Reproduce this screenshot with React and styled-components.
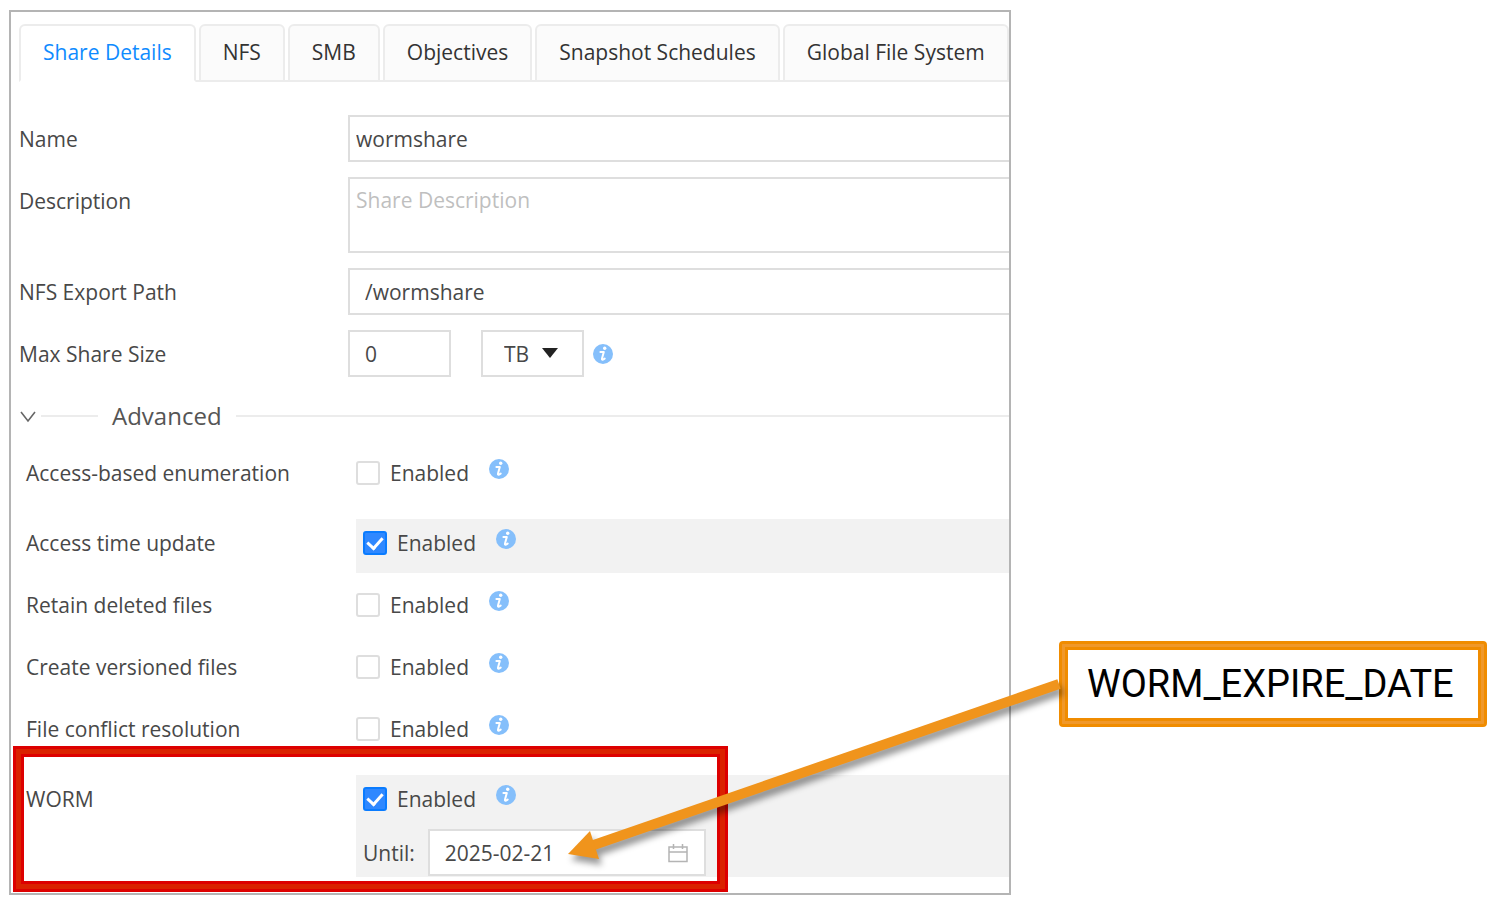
import React, { useState } from 'react';
import styled, { createGlobalStyle } from 'styled-components';

const tabs = [
  'Share Details',
  'NFS',
  'SMB',
  'Objectives',
  'Snapshot Schedules',
  'Global File System',
];

const options = [
  { id: 'enumeration', label: 'Access-based enumeration' },
  { id: 'access-time', label: 'Access time update', checked: true },
  { id: 'retain', label: 'Retain deleted files' },
  { id: 'versioned', label: 'Create versioned files' },
  { id: 'conflict', label: 'File conflict resolution' },
];

const Info = () => (
  <InfoButton type="button" aria-label="More information">
    <svg width="20" height="20" viewBox="0 0 20 20">
      <circle cx="10" cy="10" r="10" fill="#85bffb" />
      <circle cx="11.7" cy="4.2" r="1.7" fill="#fff" />
      <path
        d="M7.400 8h3.400L9 14.600q-.3 1.500 1 1l1.700-1"
        fill="none"
        stroke="#fff"
        strokeWidth="2"
        strokeLinecap="round"
        strokeLinejoin="round"
      />
    </svg>
  </InfoButton>
);

const Toggle = ({ id, name, checked }) => (
  <ToggleWrapper>
    <CheckLabel>
      <Checkbox id={id} aria-label={name} defaultChecked={checked} />
      Enabled
    </CheckLabel>
    <Info />
  </ToggleWrapper>
);

const App = () => {
  const [active, setActive] = useState(tabs[0]);

  return (
    <>
      <GlobalStyle />
      <Page>
        <Panel>
          <Tabs role="tablist">
            {tabs.map((tab) => (
              <Tab
                key={tab}
                type="button"
                role="tab"
                aria-selected={active === tab}
                $active={active === tab}
                onClick={() => setActive(tab)}
              >
                {tab}
              </Tab>
            ))}
          </Tabs>

          <Form>
            <Row>
              <Label htmlFor="name">Name</Label>
              <Input id="name" defaultValue="wormshare" />
            </Row>
            <Row>
              <Label htmlFor="description">Description</Label>
              <TextArea id="description" placeholder="Share Description" />
            </Row>
            <Row>
              <Label htmlFor="path">NFS Export Path</Label>
              <Input id="path" $indent defaultValue="/wormshare" />
            </Row>
            <Row>
              <Label htmlFor="size">Max Share Size</Label>
              <SizeFields>
                <BoxInput id="size" $width="103px" defaultValue="0" />
                <SelectWrapper>
                  <Select aria-label="Size unit" defaultValue="TB">
                    <option>GB</option>
                    <option>TB</option>
                    <option>PB</option>
                  </Select>
                  <Caret width="16" height="10" viewBox="0 0 16 10">
                    <path d="M0 0h16L8 10z" fill="#222" />
                  </Caret>
                </SelectWrapper>
                <Info />
              </SizeFields>
            </Row>
          </Form>

          <Divider>
            <ChevronButton type="button" aria-label="Toggle advanced">
              <svg width="16" height="12" viewBox="0 0 16 12">
                <path
                  d="M1 1l7 9 7-9"
                  fill="none"
                  stroke="#666"
                  strokeWidth="1.6"
                />
              </svg>
            </ChevronButton>
            <Line $width="57px" />
            <DividerTitle>Advanced</DividerTitle>
            <Line />
          </Divider>

          {options.map(({ id, label, checked }) => (
            <Option key={id} $shaded={checked}>
              <Label htmlFor={id}>{label}</Label>
              <OptionBody $shaded={checked}>
                <Toggle id={id} name={label} checked={checked} />
              </OptionBody>
            </Option>
          ))}

          <WormOption $shaded>
            <Label htmlFor="worm">WORM</Label>
            <OptionBody $shaded>
              <Toggle id="worm" name="WORM" checked />
              <Until>
                <label htmlFor="until">Until:</label>
                <DateWrapper>
                  <BoxInput
                    id="until"
                    $width="278px"
                    defaultValue="2025-02-21"
                  />
                  <Calendar width="20" height="20" viewBox="0 0 20 20">
                    <path
                      d="M1 4h18v14.500H1zM1 9h18M5.500 1v5M14.500 1v5"
                      fill="none"
                      stroke="#b4b4b4"
                      strokeWidth="1.500"
                    />
                  </Calendar>
                </DateWrapper>
              </Until>
            </OptionBody>
            <Highlight />
          </WormOption>
        </Panel>

        <Callout>
          <Arrow width="504" height="220" viewBox="0 0 504 220">
            <path d="M30 183L501 20" stroke="#f0941c" strokeWidth="10" />
            <path d="M10 190L32 167L41 195z" fill="#f0941c" />
          </Arrow>
          WORM_EXPIRE_DATE
        </Callout>
      </Page>
    </>
  );
};

export default App;

const GlobalStyle = createGlobalStyle`
  * {
    box-sizing: border-box;
  }
  body {
    margin: 0;
    background: #fff;
    color: #484848;
    font-family: 'Open Sans', 'Noto Sans', sans-serif;
    font-size: 21px;
  }
  button, input, select, textarea {
    font: inherit;
    color: inherit;
  }
`;

const Page = styled.div`
  display: flex;
  align-items: flex-end;
  gap: 48px;
  padding: 10px 9px 0;
`;

const Panel = styled.main`
  flex: 1;
  min-width: 0;
  overflow: hidden;
  padding: 12px 0 16px 8px;
  border: 2px solid #b4b4b4;
`;

const Tabs = styled.div`
  display: flex;
  gap: 3px;
  box-shadow: inset 0 -2px #ececec;
`;

const Tab = styled.button`
  flex: none;
  height: 58px;
  padding: 0 22px 2px;
  border: 2px solid #ececec;
  border-bottom-color: ${({ $active }) => ($active ? '#fff' : '#ececec')};
  border-radius: 6px 6px 0 0;
  background: ${({ $active }) => ($active ? '#fff' : '#fbfbfb')};
  color: ${({ $active }) => ($active ? '#0f8bff' : '#333')};
  white-space: nowrap;
  cursor: pointer;
`;

const Form = styled.div`
  display: flex;
  flex-direction: column;
  gap: 15px;
  margin-top: 33px;
`;

const Row = styled.div`
  display: grid;
  grid-template-columns: 329px 1fr;
  align-items: start;
`;

const Label = styled.label`
  margin-bottom: -2px;
  line-height: 49px;
`;

const Input = styled.input`
  width: 100%;
  height: 47px;
  padding: 0 ${({ $indent }) => ($indent ? '15px' : '6px')};
  border: 2px solid #dedede;
  border-right: 0;
  background: #fff;
`;

const TextArea = styled.textarea`
  display: block;
  width: 100%;
  height: 76px;
  padding: 6px;
  border: 2px solid #dedede;
  border-right: 0;
  line-height: 30px;
  resize: none;
  &::placeholder {
    color: #bfbfbf;
  }
`;

const BoxInput = styled.input`
  width: ${({ $width }) => $width};
  height: 47px;
  padding: 1px 15px 0;
  border: 2px solid #dedede;
  background: #fff;
`;

const SizeFields = styled.div`
  display: flex;
  align-items: center;
`;

const SelectWrapper = styled.div`
  position: relative;
  margin: 0 9px 0 30px;
`;

const Select = styled.select`
  display: block;
  width: 103px;
  height: 47px;
  padding: 1px 21px 0;
  border: 2px solid #dedede;
  background: #fff;
  appearance: none;
`;

const Caret = styled.svg`
  position: absolute;
  top: 18px;
  right: 26px;
  pointer-events: none;
`;

const InfoButton = styled.button`
  display: block;
  width: 20px;
  height: 20px;
  padding: 0;
  border: 0;
  background: none;
  cursor: pointer;
  svg {
    display: block;
  }
`;

const Divider = styled.div`
  display: flex;
  align-items: center;
  height: 36px;
  margin: 21px 0 15px;
`;

const ChevronButton = styled.button`
  display: flex;
  width: 22px;
  padding: 2px 0 0 1px;
  border: 0;
  background: none;
`;

const Line = styled.span`
  flex: ${({ $width }) => ($width ? `0 0 ${$width}` : '1')};
  height: 2px;
  background: #ececec;
`;

const DividerTitle = styled.h2`
  margin: 0 14px;
  padding-bottom: 1px;
  color: #555;
  font-size: 24px;
  font-weight: 400;
`;

const Option = styled.div`
  display: grid;
  grid-template-columns: 330px 1fr;
  align-items: start;
  min-height: 62px;
  margin-top: ${({ $shaded }) => ($shaded ? '8px' : '0')};
  padding-left: 7px;
`;

const OptionBody = styled.div`
  min-height: 54px;
  padding-left: ${({ $shaded }) => ($shaded ? '7px' : '0')};
  background: ${({ $shaded }) => ($shaded ? '#f2f2f2' : 'none')};
`;

const ToggleWrapper = styled.div`
  display: flex;
  gap: 20px;
  height: 48px;
  ${InfoButton} {
    margin-top: 10px;
  }
`;

const CheckLabel = styled.label`
  display: flex;
  align-items: center;
  gap: 10px;
`;

const Checkbox = styled.input.attrs({ type: 'checkbox' })`
  display: grid;
  place-items: center;
  width: 24px;
  height: 24px;
  margin: 0;
  border: 2px solid #dedede;
  border-radius: 3px;
  background: #fff;
  appearance: none;
  &:checked {
    border-color: #0a7cff;
    background: #2f88ff;
  }
  &:checked::after {
    content: '';
    width: 7px;
    height: 12px;
    margin-bottom: 3px;
    border: solid #fff;
    border-width: 0 3px 3px 0;
    transform: rotate(42deg);
  }
`;

const WormOption = styled(Option)`
  position: relative;
`;

const Until = styled.div`
  display: flex;
  align-items: center;
  gap: 13px;
  padding: 6px 0 1px;
`;

const DateWrapper = styled.div`
  position: relative;
  display: flex;
`;

const Calendar = styled.svg`
  position: absolute;
  top: 14px;
  right: 18px;
  pointer-events: none;
`;

// Red frame drawn round the WORM setting
const Highlight = styled.div`
  position: absolute;
  top: -29px;
  bottom: -15px;
  left: -6px;
  width: 715px;
  border: 3px solid #dd0000;
  box-shadow:
    inset 0 0 0 5px #da2200,
    inset 0 0 0 8px #dd0000;
  pointer-events: none;
`;

const Callout = styled.aside`
  position: relative;
  flex: none;
  width: 428px;
  margin-bottom: 168px;
  padding: 20px 25px;
  border: 3px solid #f08c00;
  border-radius: 4px;
  box-shadow:
    inset 0 0 0 3px #f0982a,
    inset 0 0 0 6px #f08c00;
  color: #000;
  font-family: Roboto, sans-serif;
  font-size: 38px;
  line-height: 40px;
`;

const Arrow = styled.svg`
  position: absolute;
  top: 20px;
  right: 100%;
  overflow: visible;
  filter: drop-shadow(3px 6px 3px rgba(0, 0, 0, 0.4));
  pointer-events: none;
`;
